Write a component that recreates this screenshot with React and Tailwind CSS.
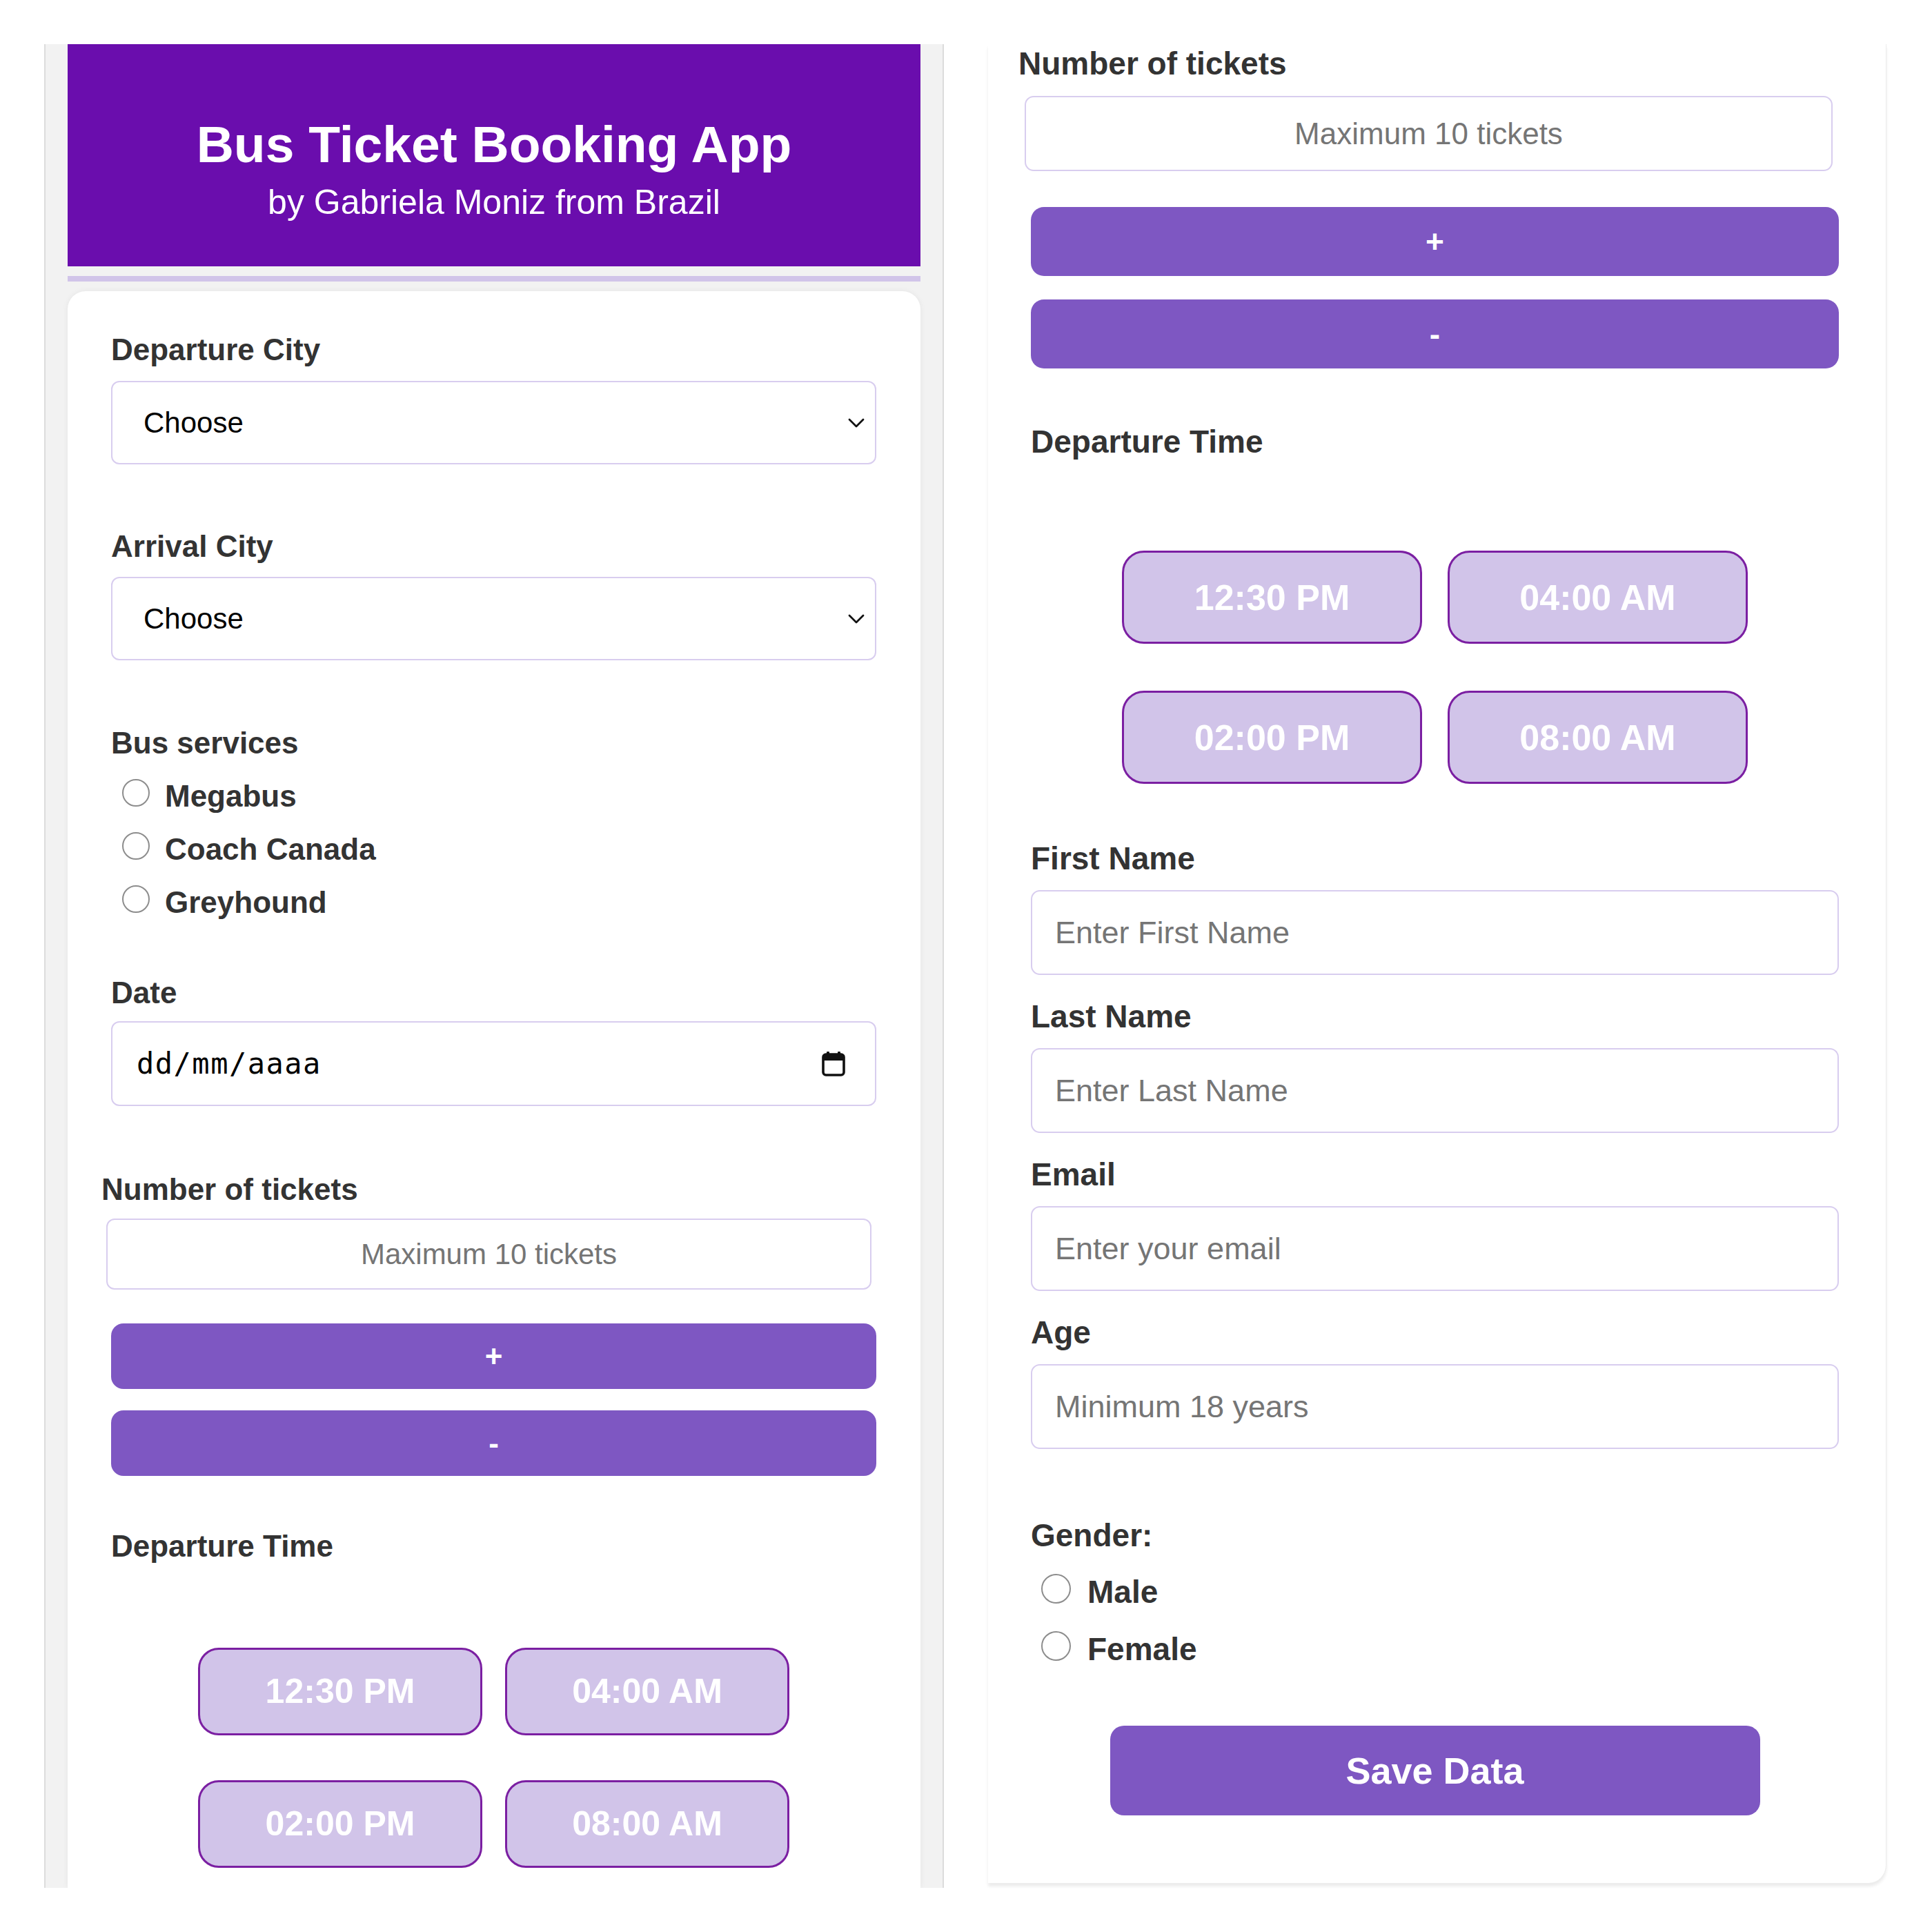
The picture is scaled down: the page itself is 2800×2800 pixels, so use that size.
import React from "react";

const ARIAL = { fontFamily: "'Liberation Sans', Arial, sans-serif" };

// left view sits at ~1x, right view is the same card scrolled, a touch bigger
const Radio = ({ size = "w-[40px] h-[40px]" }) => (
    <span className={`${size} shrink-0 rounded-full border-2 border-[#8d8d8d] bg-white`} />
);

const Chevron = () => (
    <svg width="26" height="16" viewBox="0 0 26 16" fill="none">
        <path d="M3 3 L13 13 L23 3" stroke="#111" strokeWidth="2.8" strokeLinecap="round" strokeLinejoin="round" />
    </svg>
);

const CalendarIcon = () => (
    <svg width="36" height="36" viewBox="0 0 36 36" fill="none">
        <rect x="3" y="4" width="30" height="30" rx="4" stroke="#111" strokeWidth="3.6" />
        <rect x="3" y="4" width="30" height="9" fill="#111" />
        <rect x="8" y="0" width="4" height="6" rx="1" fill="#111" />
        <rect x="24" y="0" width="4" height="6" rx="1" fill="#111" />
    </svg>
);

const TimeGrid = ({ big }) => {
    const times = ["12:30 PM", "04:00 AM", "02:00 PM", "08:00 AM"];
    return (
        <div
            className={`grid justify-center ${big
                ? "grid-cols-[435px_435px] gap-x-[37px] gap-y-[68px]"
                : "grid-cols-[412px_412px] gap-x-[33px] gap-y-[65px]"
                }`}
        >
            {times.map((t) => (
                <button
                    key={t}
                    className={`flex items-center justify-center bg-[#d1c4e9] border-[3px] border-[#7b1fa2] text-white font-bold ${big
                        ? "h-[135px] rounded-[32px] text-[52px]"
                        : "h-[127px] rounded-[30px] text-[50px]"
                        }`}
                >
                    {t}
                </button>
            ))}
        </div>
    );
};

const LeftView = () => (
    <div className="w-[1304px] h-[2672px] shrink-0 overflow-hidden bg-[#f2f2f2] border-x-2 border-[#dcdcdc] px-[32px] flex flex-col">
        {/* header */}
        <div className="h-[322px] shrink-0 bg-[#6a0dad] flex flex-col items-center pt-[102px] text-white">
            <h1 className="text-[75px] leading-[86px] font-bold">Bus Ticket Booking App</h1>
            <p className="text-[50px] leading-[58px] mt-[12px]">by Gabriela Moniz from Brazil</p>
        </div>
        <div className="h-[8px] shrink-0 mt-[14px] bg-[#d1c4e9]" />

        {/* form card */}
        <div className="flex-1 mt-[14px] bg-white rounded-t-[26px] shadow-[0_0_8px_rgba(0,0,0,0.06)] pl-[63px] pr-[64px] pt-[60px] text-[#333]">
            <label className="block text-[44px] leading-[50px] font-bold">Departure City</label>
            <div className="mt-[20px] h-[121px] border-2 border-[#d8cdef] rounded-[12px] flex items-center justify-between pl-[45px] pr-[14px]">
                <span className="text-[42px] text-black">Choose</span>
                <Chevron />
            </div>

            <label className="block mt-[94px] text-[44px] leading-[50px] font-bold">Arrival City</label>
            <div className="mt-[19px] h-[121px] border-2 border-[#d8cdef] rounded-[12px] flex items-center justify-between pl-[45px] pr-[14px]">
                <span className="text-[42px] text-black">Choose</span>
                <Chevron />
            </div>

            <label className="block mt-[95px] text-[44px] leading-[50px] font-bold">Bus services</label>
            <div className="mt-[27px] flex flex-col gap-[27px] pl-[16px]">
                {["Megabus", "Coach Canada", "Greyhound"].map((s) => (
                    <div key={s} className="flex items-start gap-[22px]">
                        <Radio />
                        <span className="text-[44px] leading-[50px] font-bold">{s}</span>
                    </div>
                ))}
            </div>

            <label className="block mt-[81px] text-[44px] leading-[50px] font-bold">Date</label>
            <div className="mt-[16px] h-[123px] border-2 border-[#d8cdef] rounded-[12px] flex items-center justify-between pl-[35px] pr-[42px]">
                <span className="text-[42px] text-black tracking-[1.5px]" style={{ fontFamily: "'DejaVu Sans Mono', monospace" }}>
                    dd/mm/aaaa
                </span>
                <CalendarIcon />
            </div>

            <label className="block mt-[96px] -ml-[14px] text-[44px] leading-[50px] font-bold">Number of tickets</label>
            <input
                className="block mt-[17px] -ml-[7px] w-full h-[103px] border-2 border-[#d8cdef] rounded-[12px] text-center text-[42px] placeholder:text-[#757575] outline-none"
                placeholder="Maximum 10 tickets"
            />
            <button className="block w-full mt-[49px] h-[95px] rounded-[18px] bg-[#7e57c2] text-white text-[44px] font-bold">+</button>
            <button className="block w-full mt-[31px] h-[95px] rounded-[18px] bg-[#7e57c2] text-white text-[44px] font-bold">-</button>

            <label className="block mt-[77px] text-[44px] leading-[50px] font-bold">Departure Time</label>
            <div className="mt-[122px]">
                <TimeGrid />
            </div>
        </div>
    </div>
);

const Field = ({ label, placeholder, first }) => (
    <>
        <label className={`block ${first ? "mt-[82px]" : "mt-[34px]"} text-[46px] leading-[53px] font-bold`}>{label}</label>
        <input
            className="block mt-[19px] w-full h-[123px] border-2 border-[#d8cdef] rounded-[13px] pl-[33px] text-[45px] placeholder:text-[#757575] outline-none"
            placeholder={placeholder}
        />
    </>
);

const RightView = () => (
    <div className="w-[1302px] h-[2665px] shrink-0 bg-white rounded-br-[26px] border-r border-[#ececec] shadow-[0_5px_4px_rgba(0,0,0,0.08)] pl-[62px] pr-[68px] pt-[2px] text-[#333]">
        <label className="block -ml-[18px] text-[46px] leading-[53px] font-bold">Number of tickets</label>
        <input
            className="block mt-[20px] -ml-[9px] w-full h-[109px] border-2 border-[#d8cdef] rounded-[13px] text-center text-[44px] placeholder:text-[#757575] outline-none"
            placeholder="Maximum 10 tickets"
        />
        <button className="block w-full mt-[52px] h-[100px] rounded-[19px] bg-[#7e57c2] text-white text-[46px] font-bold">+</button>
        <button className="block w-full mt-[34px] h-[100px] rounded-[19px] bg-[#7e57c2] text-white text-[46px] font-bold">-</button>

        <label className="block mt-[80px] text-[46px] leading-[53px] font-bold">Departure Time</label>
        <div className="mt-[131px]">
            <TimeGrid big />
        </div>

        <Field first label="First Name" placeholder="Enter First Name" />
        <Field label="Last Name" placeholder="Enter Last Name" />
        <Field label="Email" placeholder="Enter your email" />
        <Field label="Age" placeholder="Minimum 18 years" />

        <label className="block mt-[99px] text-[46px] leading-[53px] font-bold">Gender:</label>
        <div className="mt-[29px] flex flex-col gap-[30px] pl-[15px]">
            {["Male", "Female"].map((g) => (
                <div key={g} className="flex items-start gap-[24px]">
                    <Radio size="w-[43px] h-[43px]" />
                    <span className="text-[46px] leading-[53px] font-bold">{g}</span>
                </div>
            ))}
        </div>

        <div className="mt-[84px] flex justify-center">
            <button className="w-[942px] h-[130px] rounded-[20px] bg-[#7e57c2] text-white text-[54px] font-bold">Save Data</button>
        </div>
    </div>
);

export default function App() {
    return (
        <div className="w-[2800px] h-[2800px] bg-white flex items-start pt-[64px] pl-[64px] gap-[64px]" style={ARIAL}>
            <LeftView />
            <RightView />
        </div>
    );
}
